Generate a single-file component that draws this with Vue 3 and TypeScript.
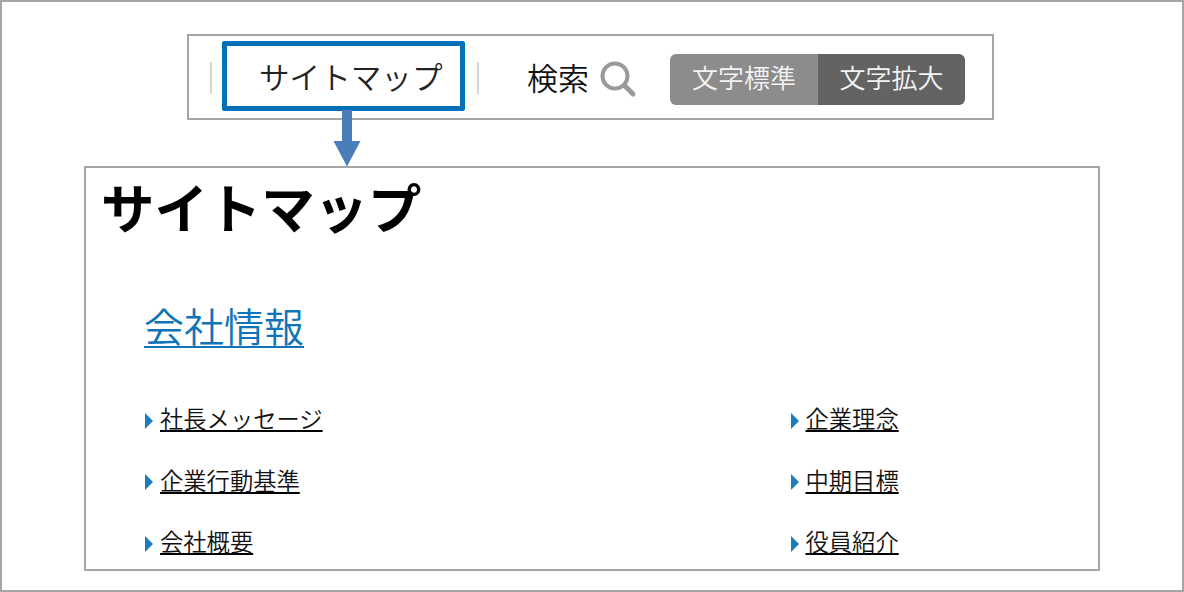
<script setup lang="ts">
const rows: [string, string][] = [
  ['社長メッセージ', '企業理念'],
  ['企業行動基準', '中期目標'],
  ['会社概要', '役員紹介'],
]
const links = rows.flat()
</script>

<template>
  <div class="frame">
    <div class="bar">
      <span class="sep first"></span>
      <div class="highlight">サイトマップ</div>
      <span class="sep"></span>
      <span class="search">検索</span>
      <svg class="lens" width="38" height="38" viewBox="0 0 38 38" fill="none" stroke="#9a9a9a">
        <circle cx="16" cy="16" r="12.5" stroke-width="4" />
        <path d="M25.5 25.5 L34 34" stroke-width="5" stroke-linecap="round" />
      </svg>
      <div class="sizes">
        <span class="size std">文字標準</span>
        <span class="size big">文字拡大</span>
      </div>
    </div>
    <div class="panel">
      <svg class="arrow" width="28" height="57" viewBox="0 0 28 57">
        <path d="M9 0 H19 V31 H27.5 L14 56.5 L0.5 31 H9 Z" fill="#4a7ebb" />
      </svg>
      <h1>サイトマップ</h1>
      <a class="section">会社情報</a>
      <ul>
        <li v-for="l in links" :key="l"><a>{{ l }}</a></li>
      </ul>
    </div>
  </div>
</template>

<style>
html, body { margin: 0; background: #fff; }
</style>

<style scoped>
.frame {
  box-sizing: border-box;
  width: 1184px;
  height: 592px;
  border: 2px solid #a6a6a6;
  padding-top: 32px;
  overflow: hidden;
  font-family: "Noto Sans CJK JP", sans-serif;
  font-weight: 350;
  color: #111;
}
.bar {
  box-sizing: border-box;
  width: 807px;
  height: 86px;
  margin-left: 185px;
  border: 2px solid #a6a6a6;
  display: flex;
  align-items: center;
  background: #fff;
}
.sep {
  width: 2px;
  height: 32px;
  background: #d4d6d4;
  margin-top: 2px;
  flex: none;
}
.first { margin-left: 21px; }
.highlight {
  box-sizing: border-box;
  width: 243px;
  height: 70px;
  margin: 0 12px 2px 10px;
  border: 5px solid #0070b8;
  border-radius: 2px;
  padding-left: 32px;
  font-size: 30.6px;
  line-height: 60px;
  white-space: nowrap;
  color: #222;
}
.search {
  margin-left: 48px;
  font-size: 31px;
  line-height: 40px;
  white-space: nowrap;
}
.lens { margin-left: 10px; margin-top: 3px; flex: none; }
.sizes {
  display: flex;
  margin-left: 33px;
  margin-top: 4px;
  height: 51px;
  border-radius: 6px;
  overflow: hidden;
}
.size {
  width: 148px;
  font-size: 26px;
  line-height: 45px;
  text-align: center;
  color: #f4f4f4;
  white-space: nowrap;
}
.std { background: #8c8c8c; }
.big { background: #636363; width: 147px; }
.panel {
  position: relative;
  box-sizing: border-box;
  width: 1016px;
  height: 405px;
  margin: 46px 0 0 82px;
  border: 2px solid #a6a6a6;
  padding: 0 0 0 15px;
}
.arrow { position: absolute; left: 247px; top: -58px; }
h1 {
  margin: 0;
  font-size: 53.4px;
  line-height: 76px;
  font-weight: 700;
  color: #000;
  white-space: nowrap;
}
.section {
  display: inline-block;
  margin: 43px 0 0 43px;
  font-size: 40px;
  line-height: 76px;
  color: #0f74b8;
  text-decoration: underline;
  text-decoration-thickness: 2px;
  text-underline-offset: 4px;
}
ul {
  list-style: none;
  margin: 38px 0 0 44px;
  padding: 0;
  display: grid;
  grid-template-columns: 645.5px 1fr;
  row-gap: 27.5px;
}
li {
  display: flex;
  align-items: center;
  height: 34px;
  font-size: 23.3px;
  line-height: 34px;
  color: #111;
}
li::before {
  content: "";
  width: 0;
  height: 0;
  border-left: 8px solid #1a7dc0;
  border-top: 8px solid transparent;
  border-bottom: 8px solid transparent;
  margin-right: 7px;
  flex: none;
  margin-top: 5px;
}
li a {
  text-decoration: underline;
  text-decoration-color: #000;
  text-decoration-thickness: 2px;
  text-underline-offset: 2px;
  white-space: nowrap;
}
</style>
